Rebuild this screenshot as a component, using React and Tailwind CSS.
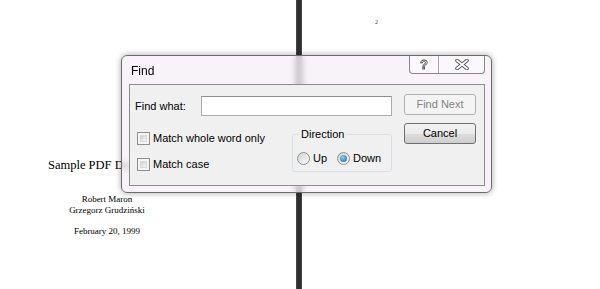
import React from "react";

const ui = "font-['Segoe_UI','Liberation_Sans',sans-serif]";

function Checkbox({ label }) {
  return (
    <label className="flex items-center gap-[3px] h-[16px]">
      <span className="w-[13px] h-[13px] border border-[#8e8f8f] bg-[#f4f4f4] p-[2px] flex">
        <span className="flex-1 bg-gradient-to-br from-[#cdd0d5] to-[#f7f7f7] border border-[#dadada]" />
      </span>
      <span>{label}</span>
    </label>
  );
}

function Radio({ label, checked }) {
  return (
    <label className="flex items-center gap-[3px]">
      <span className="w-[13px] h-[13px] rounded-full border border-[#8e8f8f] bg-gradient-to-br from-[#d2d2d2] to-[#fbfbfb] flex items-center justify-center">
        {checked && (
          <span className="w-[7px] h-[7px] rounded-full bg-[radial-gradient(circle_at_40%_35%,#8fd0f5,#1c5f93)]" />
        )}
      </span>
      <span>{label}</span>
    </label>
  );
}

function FindDialog() {
  return (
    <div className="absolute left-[121px] top-[55px] w-[371px] h-[138px] rounded-[6px] border border-[#6e6a70] bg-[#f4eef6]/70 backdrop-blur-[3px] shadow-[0_0_6px_rgba(0,0,0,0.35)] flex flex-col pl-[7px] pr-[6px] pb-[6px]">
      {/* title bar */}
      <div className="relative h-[28px] flex items-center pl-[2px] pt-[1px] text-[12px] text-black">
        Find
        <div className="absolute right-[0px] top-0 h-[18px] flex border border-t-0 border-[#8a868c] rounded-b-[4px] overflow-hidden bg-white/40">
          <div className="w-[28px] flex items-center justify-center font-bold text-[13px] text-white [-webkit-text-stroke:0.8px_#4a4a4a] leading-none">
            ?
          </div>
          <div className="w-[46px] flex items-center justify-center border-l border-[#a9a5ab]">
            <svg width="16" height="11" viewBox="0 0 16 11">
              <path d="M3 1.5 L13 9.5 M13 1.5 L3 9.5" stroke="#585858" strokeWidth="3.6" strokeLinecap="round" />
              <path d="M3 1.5 L13 9.5 M13 1.5 L3 9.5" stroke="#ffffff" strokeWidth="1.8" strokeLinecap="round" />
            </svg>
          </div>
        </div>
      </div>
      {/* client area */}
      <div className="flex-1 border border-[#8f8b92] bg-[#f0f0f0] flex pl-[5px] pr-[8px] text-[11px] text-black">
        <div className="flex flex-col w-[257px]">
          <div className="flex items-center mt-[11px]">
            <span className="w-[66px]">Find what:</span>
            <div className="w-[191px] h-[20px] border border-[#abadb3] border-t-[#8e8f8f] bg-white" />
          </div>
          <div className="flex justify-between mt-[13px]">
            <div className="flex flex-col gap-[10px] pl-[2px] pt-[1px]">
              <Checkbox label="Match whole word only" />
              <Checkbox label="Match case" />
            </div>
            <fieldset className="w-[100px] h-[45px] border border-[#d5dfe5] rounded-[3px] px-[4px] mt-[-2px]">
              <legend className="ml-[2px] px-[2px] leading-[15px]">Direction</legend>
              <div className="flex gap-[10px] mt-[8px]">
                <Radio label="Up" />
                <Radio label="Down" checked />
              </div>
            </fieldset>
          </div>
        </div>
        <div className="flex flex-col ml-auto pt-[9px] gap-[8px]">
          <button className="w-[72px] h-[21px] border border-[#adb2b5] rounded-[3px] bg-[#f4f4f4] text-[#838383]">
            Find Next
          </button>
          <button className="w-[72px] h-[21px] border border-[#707070] rounded-[3px] bg-[linear-gradient(#f2f2f2_0%,#ebebeb_50%,#dddddd_50%,#cfcfcf_100%)] text-black">
            Cancel
          </button>
        </div>
      </div>
    </div>
  );
}

export default function App() {
  return (
    <div className={`relative w-[600px] h-[289px] bg-white overflow-hidden flex ${ui}`}>
      {/* left page */}
      <div className="w-[296px] font-['Liberation_Serif',serif] text-black">
        <div className="pl-[48px] pt-[157px] text-[12.5px] leading-[17px] whitespace-nowrap">
          Sample PDF Document
        </div>
        <div className="w-[214px] text-center text-[9px] leading-[11px] mt-[20px]">
          <p>Robert Maron</p>
          <p>Grzegorz Grudziński</p>
          <p className="mt-[10px]">February 20, 1999</p>
        </div>
      </div>
      {/* page gap */}
      <div className="w-[6px] bg-[#303030] border-x border-[#454545]" />
      {/* right page */}
      <div className="flex-1 font-['Liberation_Serif',serif]">
        <div className="pl-[73px] pt-[18px] text-[6px] text-[#333]">2</div>
      </div>
      <FindDialog />
    </div>
  );
}
